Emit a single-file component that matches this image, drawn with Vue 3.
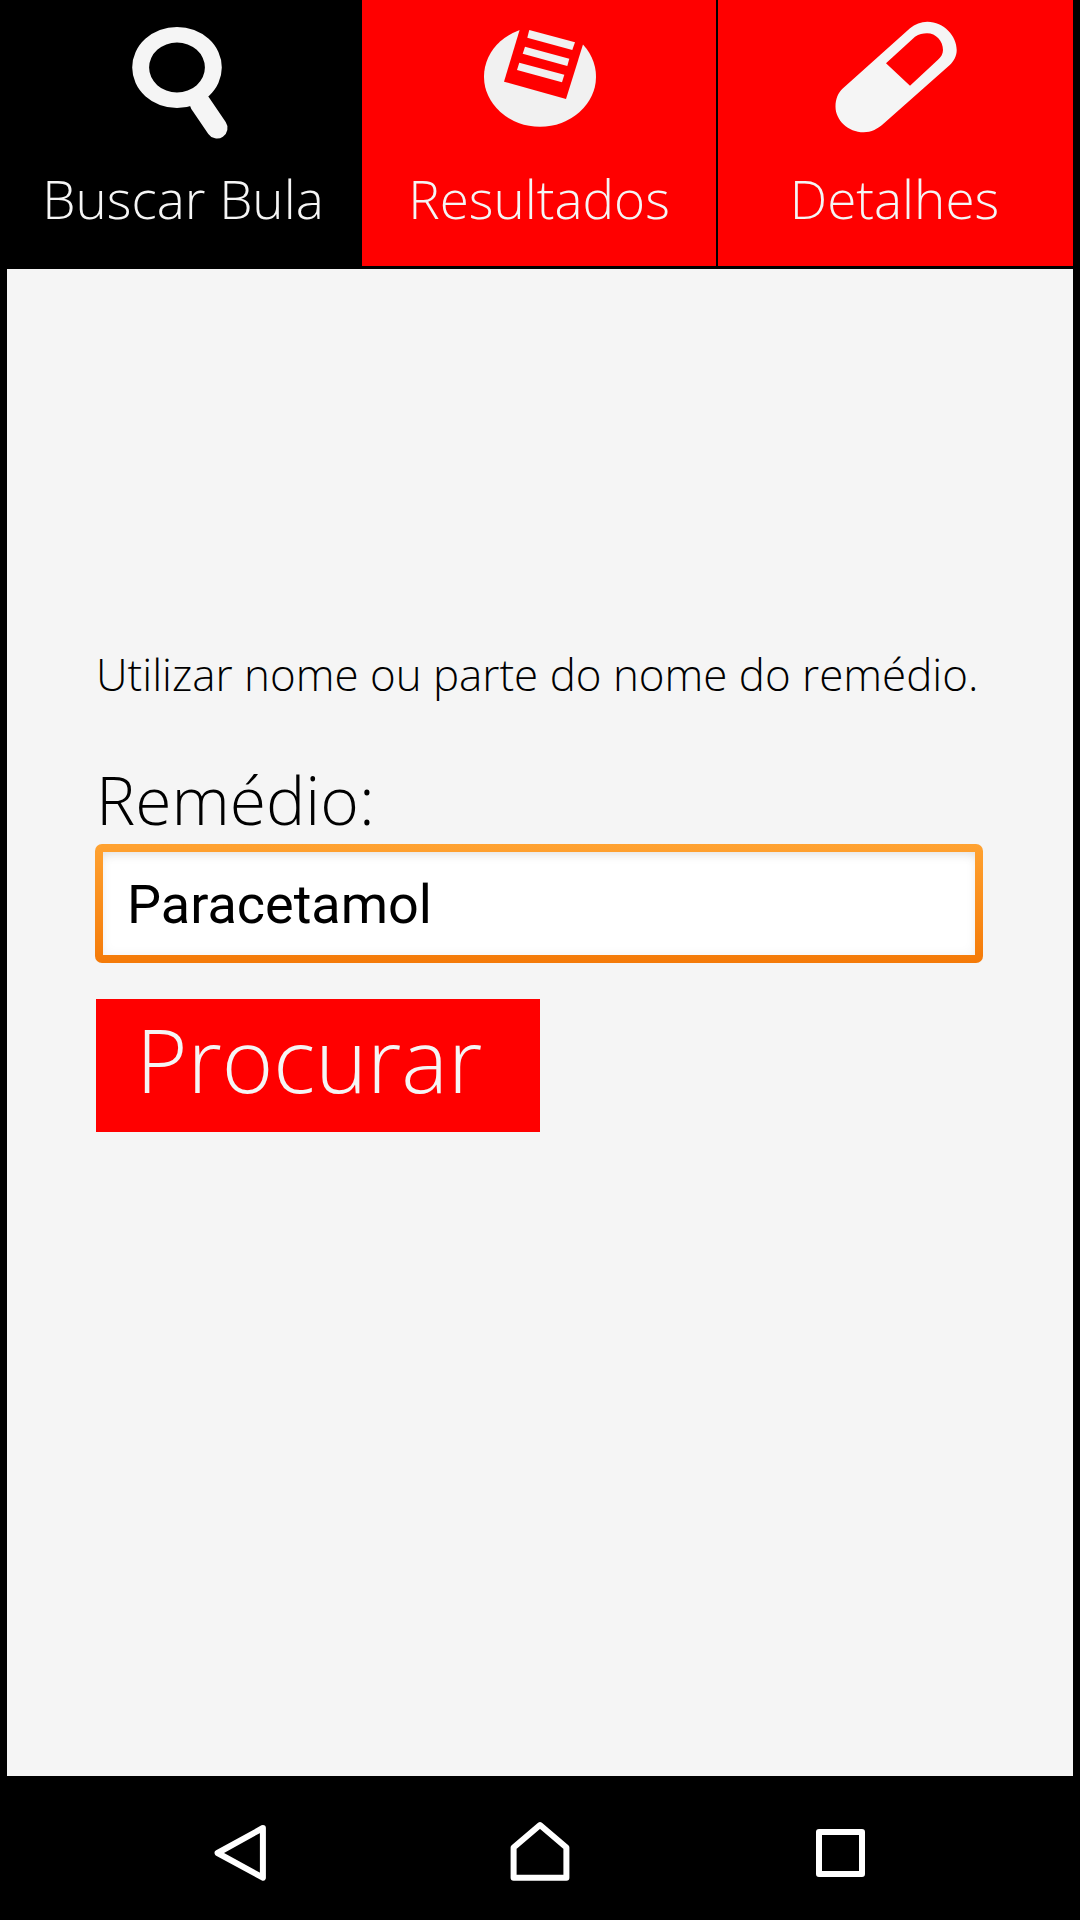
<template>
  <div class="screen">
    <div class="tabs">
      <div class="tab tab-active">
        <svg class="tab-icon" width="362" height="164" viewBox="0 0 362 164">
          <path class="glass" fill-rule="evenodd" d="M132.2 67.5a44.8 40.5 0 1 0 89.6 0a44.8 40.5 0 1 0 -89.6 0zM149.1 67.5a27.9 25 0 1 1 55.8 0a27.9 25 0 1 1 -55.8 0z" />
          <line class="handle" x1="200" y1="103" x2="217" y2="128" />
        </svg>
        <span class="tab-label label-first">Buscar Bula</span>
      </div>
      <div class="tab">
        <svg class="tab-icon" width="354" height="164" viewBox="362 0 354 164">
          <ellipse cx="540" cy="76.7" rx="56" ry="50" fill="#f1f1f1" />
          <polygon points="522,22 590,22 566,99 504,81.7" fill="#f00" />
          <polygon points="529.3,30 575,42.3 572.3,50 527.3,37.7" fill="#f1f1f1" />
          <polygon points="525,46.7 569.3,58.7 567.3,66 522.7,53.7" fill="#f1f1f1" />
          <polygon points="519.3,62.7 564.3,74.7 562,82.3 517,70" fill="#f1f1f1" />
        </svg>
        <span class="tab-label">Resultados</span>
      </div>
      <div class="tab-sep"></div>
      <div class="tab tab-last">
        <svg class="tab-icon" width="355" height="164" viewBox="718 0 355 164">
          <path class="pill" d="M843 88.3L910 28.3C915 24 921 21.7 927.4 21.7C944 21.7 956.7 36 956.7 50C956.7 56 954 61 949.8 65L884 123.3C878 129 871 132.3 863.7 132.3C848 132.3 835.5 120 835.5 106.7C835.5 99 838 93 843 88.3Z" />
          <path d="M886 63.3L915 36.7C919 34 923 33.3 927 33.3C936 33.3 943 41 943 50C943 54 941 57 937.7 60L910 85.7Z" fill="#f00" />
        </svg>
        <span class="tab-label label-last">Detalhes</span>
      </div>
    </div>

    <div class="content">
      <p class="hint">Utilizar nome ou parte do nome do remédio.</p>
      <label class="field-label">Remédio:</label>
      <input class="field" type="text" value="Paracetamol" readonly />
      <div class="search-btn">Procurar</div>
    </div>

    <div class="navbar">
      <svg class="nav-icon" width="1080" height="144" viewBox="0 1776 1080 144">
        <path class="nav-stroke" d="M262.9 1828L217.6 1853L262.9 1877.7Z" />
        <path class="nav-stroke" d="M513.6 1877.7V1847.5L540 1825L566.4 1847.5V1877.7Z" />
        <rect class="nav-stroke" x="819" y="1832" width="43" height="42" />
      </svg>
    </div>
  </div>
</template>

<script setup>
</script>

<style>
html,
body {
  margin: 0;
  background: #000;
}
</style>

<style scoped>
.screen {
  width: 1080px;
  height: 1920px;
  background: #000;
  display: flex;
  flex-direction: column;
  font-family: "Open Sans", "Liberation Sans", sans-serif;
  font-weight: 300;
  overflow: hidden;
}
.tabs {
  display: flex;
  height: 266px;
  margin-bottom: 3px;
  padding-right: 7px;
  flex-shrink: 0;
}
.tab {
  width: 354px;
  background: #f00;
  display: flex;
  flex-direction: column;
  align-items: center;
}
.tab-active {
  width: 362px;
  background: #000;
}
.tab-last {
  width: 355px;
}
.tab-sep {
  width: 2px;
  background: #000;
}
.tab-icon {
  display: block;
  flex-shrink: 0;
}
.tab-label {
  font-size: 53px;
  line-height: 70px;
  color: #f5f5f5;
  white-space: nowrap;
}
.label-first {
  padding-left: 4px;
}
.label-last {
  padding-right: 2px;
}
.glass {
  fill: #f5f5f5;
}
.handle {
  stroke: #f5f5f5;
  stroke-width: 21;
  stroke-linecap: round;
}
.pill {
  fill: #f5f5f5;
}
.content {
  flex: 1;
  margin: 0 7px;
  padding: 375px 89px 0;
  background: #f5f5f5;
  color: #000;
  display: flex;
  flex-direction: column;
  align-items: flex-start;
}
.hint {
  margin: 0 0 55px;
  font-size: 43.9px;
  line-height: 60px;
  white-space: nowrap;
}
.field-label {
  font-size: 66px;
  line-height: 80px;
  margin-bottom: 5px;
}
.field {
  box-sizing: border-box;
  width: 888px;
  height: 119px;
  margin: 0 0 36px -1px;
  padding: 2px 21px 0 24px;
  border: 8px solid transparent;
  border-radius: 7px;
  background: linear-gradient(#fff, #fff) padding-box,
    linear-gradient(#ffa231, #f47a08) border-box;
  box-shadow: inset 0 8px 12px -6px rgba(0, 0, 0, 0.1),
    inset 0 0 12px rgba(0, 0, 0, 0.05);
  font-family: Roboto, "Liberation Sans", sans-serif;
  font-weight: 400;
  font-size: 54px;
  color: #000;
  outline: none;
}
.search-btn {
  box-sizing: border-box;
  width: 444px;
  height: 133px;
  padding: 0 0 14px 40px;
  background: #f00;
  color: #f5f5f5;
  font-size: 88px;
  display: flex;
  align-items: center;
}
.navbar {
  height: 144px;
  flex-shrink: 0;
}
.nav-icon {
  display: block;
}
.nav-stroke {
  fill: none;
  stroke: #fff;
  stroke-width: 6;
  stroke-linejoin: round;
}
</style>
